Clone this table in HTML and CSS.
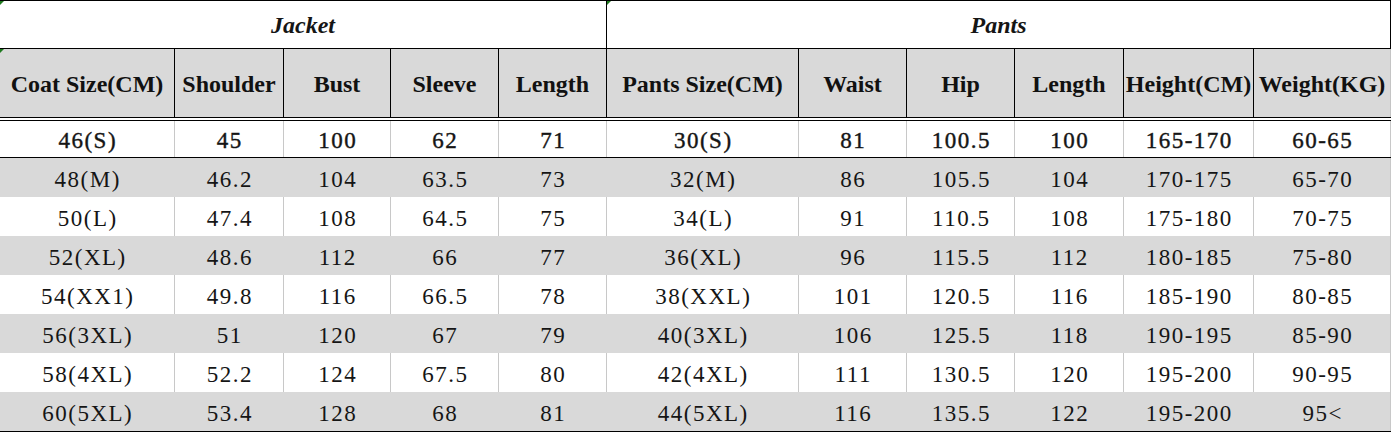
FILE: index.html
```html
<!DOCTYPE html>
<html lang="en">
<head>
<meta charset="utf-8">
<title>Size Chart</title>
<link rel="stylesheet" href="styles.css">
</head>
<body>
<div class="sheet">
  <div class="title-row">
    <div class="title title-jacket flag">Jacket</div>
    <div class="title title-pants flag">Pants</div>
  </div>
  <div class="grid head-row">
    <div class="cell head flag">Coat Size(CM)</div>
    <div class="cell head">Shoulder</div>
    <div class="cell head">Bust</div>
    <div class="cell head">Sleeve</div>
    <div class="cell head">Length</div>
    <div class="cell head">Pants Size(CM)</div>
    <div class="cell head">Waist</div>
    <div class="cell head">Hip</div>
    <div class="cell head">Length</div>
    <div class="cell head">Height(CM)</div>
    <div class="cell head last">Weight(KG)</div>
  </div>
  <div class="body">
    <div class="grid data-row first white">
      <div class="cell">46(S)</div><div class="cell">45</div><div class="cell">100</div><div class="cell">62</div><div class="cell">71</div>
      <div class="cell">30(S)</div><div class="cell">81</div><div class="cell">100.5</div><div class="cell">100</div><div class="cell">165-170</div><div class="cell">60-65</div>
    </div>
    <div class="grid data-row grey">
      <div class="cell">48(M)</div><div class="cell">46.2</div><div class="cell">104</div><div class="cell">63.5</div><div class="cell">73</div>
      <div class="cell">32(M)</div><div class="cell">86</div><div class="cell">105.5</div><div class="cell">104</div><div class="cell">170-175</div><div class="cell">65-70</div>
    </div>
    <div class="grid data-row white">
      <div class="cell">50(L)</div><div class="cell">47.4</div><div class="cell">108</div><div class="cell">64.5</div><div class="cell">75</div>
      <div class="cell">34(L)</div><div class="cell">91</div><div class="cell">110.5</div><div class="cell">108</div><div class="cell">175-180</div><div class="cell">70-75</div>
    </div>
    <div class="grid data-row grey">
      <div class="cell">52(XL)</div><div class="cell">48.6</div><div class="cell">112</div><div class="cell">66</div><div class="cell">77</div>
      <div class="cell">36(XL)</div><div class="cell">96</div><div class="cell">115.5</div><div class="cell">112</div><div class="cell">180-185</div><div class="cell">75-80</div>
    </div>
    <div class="grid data-row white">
      <div class="cell">54(XX1)</div><div class="cell">49.8</div><div class="cell">116</div><div class="cell">66.5</div><div class="cell">78</div>
      <div class="cell">38(XXL)</div><div class="cell">101</div><div class="cell">120.5</div><div class="cell">116</div><div class="cell">185-190</div><div class="cell">80-85</div>
    </div>
    <div class="grid data-row grey">
      <div class="cell">56(3XL)</div><div class="cell">51</div><div class="cell">120</div><div class="cell">67</div><div class="cell">79</div>
      <div class="cell">40(3XL)</div><div class="cell">106</div><div class="cell">125.5</div><div class="cell">118</div><div class="cell">190-195</div><div class="cell">85-90</div>
    </div>
    <div class="grid data-row white">
      <div class="cell">58(4XL)</div><div class="cell">52.2</div><div class="cell">124</div><div class="cell">67.5</div><div class="cell">80</div>
      <div class="cell">42(4XL)</div><div class="cell">111</div><div class="cell">130.5</div><div class="cell">120</div><div class="cell">195-200</div><div class="cell">90-95</div>
    </div>
    <div class="grid data-row grey">
      <div class="cell">60(5XL)</div><div class="cell">53.4</div><div class="cell">128</div><div class="cell">68</div><div class="cell">81</div>
      <div class="cell">44(5XL)</div><div class="cell">116</div><div class="cell">135.5</div><div class="cell">122</div><div class="cell">195-200</div><div class="cell">95&lt;</div>
    </div>
  </div>
</div>
</body>
</html>
```
FILE: styles.css
```css
* { box-sizing: border-box; }

html, body {
  margin: 0;
  padding: 0;
  background: #ffffff;
}

body {
  overflow: hidden;
  font-family: "Liberation Serif", "Times New Roman", serif;
  color: #151515;
}

.sheet {
  width: 1391px;
}

.title-row {
  display: flex;
  height: 49px;
  border-top: 1px solid #000;
  border-bottom: 1px solid #000;
}

.title {
  display: flex;
  align-items: center;
  justify-content: center;
  font-size: 24px;
  font-weight: bold;
  font-style: italic;
  line-height: 1;
  border-right: 1px solid #000;
  position: relative;
}

.title-jacket { width: 607px; }
.title-pants { width: 784px; }

.flag::before {
  content: "";
  position: absolute;
  left: 0;
  top: 0;
  width: 0;
  height: 0;
  border-top: 4px solid #1f7a1f;
  border-right: 4px solid transparent;
}

.grid {
  display: grid;
  grid-template-columns: 175px 109px 107px 108px 108px 192px 108px 108px 109px 130px 137px;
}

.head-row {
  height: 69px;
  background: #d9d9d9;
  border-bottom: 1px solid #000;
}

.cell {
  display: flex;
  align-items: center;
  justify-content: center;
  white-space: nowrap;
  position: relative;
}

.head {
  font-size: 24px;
  font-weight: bold;
  line-height: 1;
  padding-top: 2px;
  border-right: 1px solid #000;
  color: #111;
}

.head.last {
  border-right-color: #c4c4c4;
}

.body {
  margin-top: 2px;
  border-top: 1px solid #000;
  border-bottom: 1px solid #000;
}

.data-row {
  height: 39px;
}

.data-row .cell {
  font-size: 23px;
  line-height: 1;
  letter-spacing: 1.5px;
  padding-left: 1.5px;
  padding-top: 3px;
}

.data-row.first {
  height: 37px;
  border-bottom: 1px solid #000;
}

.data-row.first .cell {
  -webkit-text-stroke: 0.4px #151515;
}

.white {
  background: #ffffff;
}

.white .cell {
  border-right: 1px solid #c8c8c8;
}

.grey {
  background: #d9d9d9;
}

.grey .cell {
  border-right: 1px solid #d9d9d9;
}

.grey .cell:last-child {
  border-right-color: #c8c8c8;
}
```
